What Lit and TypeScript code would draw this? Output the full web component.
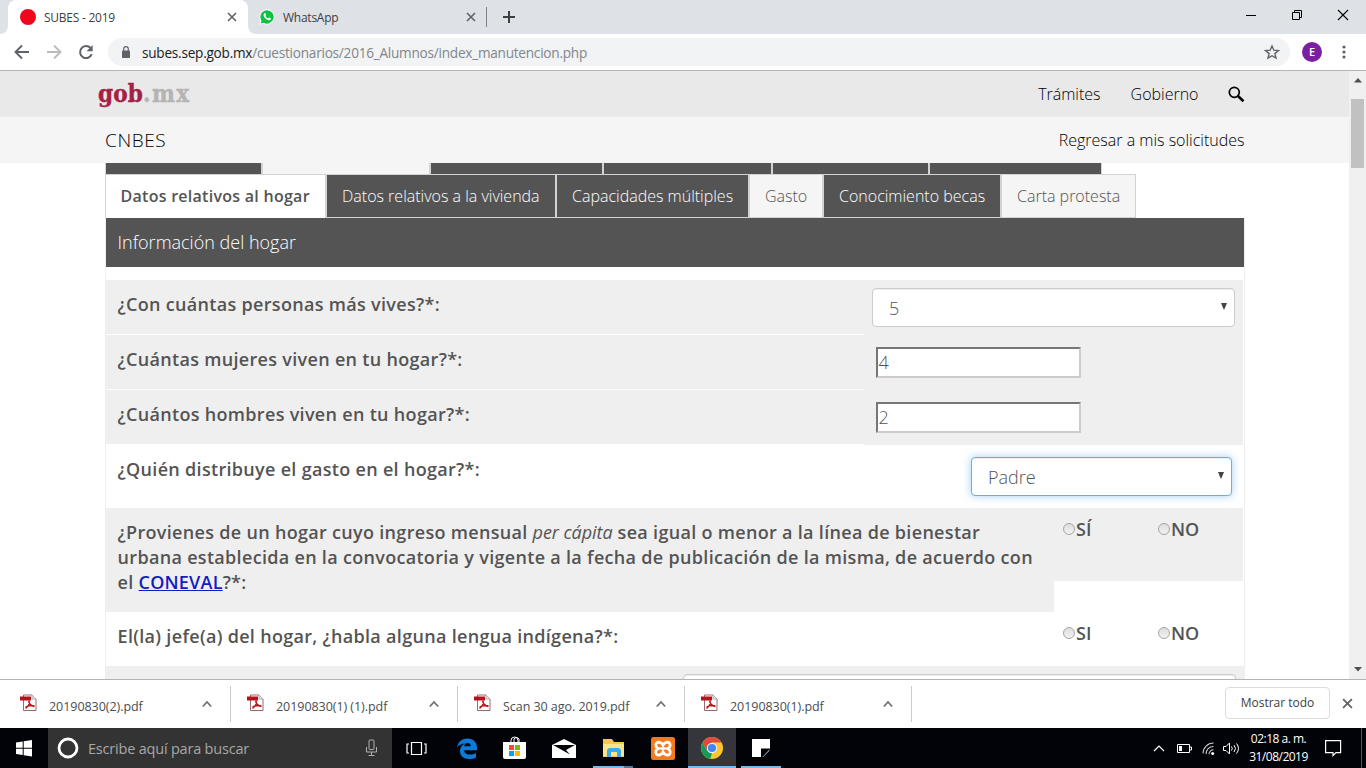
import { LitElement, html, css, svg } from "lit";
import { customElement } from "lit/decorators.js";

const closeIcon = (s: number) => html`<svg width=${s} height=${s} viewBox="0 0 10 10"><path d="M1 1l8 8M9 1l-8 8" stroke="#5f6368" stroke-width="1.6" fill="none"/></svg>`;

const pdfIcon = html`<svg width="17" height="17" viewBox="0 0 17 17"><path d="M3.5 1h8.500l4 4v11.500H3.500z" fill="#fff" stroke="#8a5a5e" stroke-width=".9"/><path d="M12 1v4h4" fill="#eee" stroke="#999" stroke-width=".8"/><path d="M9 6.500c1 2.500-.5 5.500-3.500 8M8.500 7c.5 2.500 2.500 4.800 6 5.500M5.500 13c3-1.500 6-1.800 9-1.200" fill="none" stroke="#b5121b" stroke-width="1.300"/><rect x="0" y="2.500" width="11" height="4" fill="#b5121b"/></svg>`;

@customElement("browser-chrome")
class BrowserChrome extends LitElement {
  static styles = css`
    :host { display: block; font-family: "Open Sans", "Noto Sans", sans-serif; color: #3c4043; }
    svg { display: block; flex: none; }
    .strip { display: flex; height: 34px; background: #dee1e6; align-items: stretch; }
    .edge { width: 8px; background: #fff; }
    .edge::before { content: ""; display: block; height: 34px; background: #dee1e6; border-bottom-right-radius: 8px; }
    .edge.right { width: 9px; }
    .edge.right::before { border-radius: 0 0 0 8px; }
    .tab { display: flex; align-items: center; font-size: 12px; box-sizing: border-box; white-space: nowrap; letter-spacing: -.25px; }
    .tab.active { width: 240px; background: #fff; border-radius: 8px 8px 0 0; padding: 0 11px 0 12px; }
    .tab.idle { width: 229px; padding: 0 10px 0 2px; }
    .tab .name { margin-left: 8px; flex: 1; }
    .dot { width: 16px; height: 16px; border-radius: 50%; background: #f0071c; }
    .sep { width: 1px; height: 20px; margin: 7px 15px 0 0; background: #80848a; }
    .plus { align-self: center; }
    .win { margin-left: auto; display: flex; align-items: center; gap: 34px; padding: 0 17px 5px 0; }
    .bar { display: flex; height: 36px; background: #fff; align-items: center; border-bottom: 1px solid #b6b4b6; }
    .nav { display: flex; gap: 16px; padding-left: 14px; width: 94px; }
    .omni { display: flex; align-items: center; box-sizing: border-box; width: 1182px; height: 28px; border-radius: 14px; background: #f1f3f4; padding: 0 10px 0 13px; font-size: 13.600px; white-space: nowrap; }
    .url { margin-left: 11px; flex: 1; letter-spacing: -.235px; color: #80868b; }
    .url b { font-weight: 400; color: #202124; }
    .avatar { width: 20px; height: 20px; margin-left: 12px; border-radius: 50%; background: #7b1fa2; color: #fff; font: 600 11px/20px "Open Sans", sans-serif; text-align: center; }
    .dots { margin-left: 20px; }
  `;
  render() {
    return html`
      <div class="strip">
        <div class="edge"></div>
        <div class="tab active"><span class="dot"></span><span class="name">SUBES - 2019</span>${closeIcon(10)}</div>
        <div class="edge right"></div>
        <div class="tab idle">
          <svg width="16" height="16" viewBox="0 0 16 16"><path d="M8 .3a7.600 7.600 0 1 1-3.700 14.300L.3 15.700l1.200-4A7.600 7.600 0 0 1 8 .3z" fill="#fff"/><path d="M8 1.200a6.700 6.700 0 1 1-3.400 12.500l-3 .8.900-2.900A6.700 6.700 0 0 1 8 1.200z" fill="#0dc143"/><path d="M5.300 4.300c.6-.5 1-.3 1.200.2l.5 1.200c.1.400-.5.900-.6 1.200.6 1.200 1.500 2 2.700 2.500.4-.2.800-1 1.200-.9l1.400.7c.6.400 0 1.600-.8 1.900-1.400.6-3.700-.5-5-2C4.600 7.600 4 5.400 5.300 4.300z" fill="#fff"/></svg>
          <span class="name">WhatsApp</span>${closeIcon(10)}
        </div>
        <div class="sep"></div>
        <svg class="plus" width="14" height="14" viewBox="0 0 14 14"><path d="M7 1v12M1 7h12" stroke="#3c4043" stroke-width="2"/></svg>
        <div class="win">
          <svg width="12" height="12" viewBox="0 0 12 12"><path d="M1 6.500h10" stroke="#000"/></svg>
          <svg width="12" height="12" viewBox="0 0 12 12"><path d="M1.500 3.500h7v7h-7zM3.500 3V1.500h7v7H9" fill="none" stroke="#000"/></svg>
          <svg width="12" height="12" viewBox="0 0 12 12"><path d="M1 1l10 10M11 1L1 11" stroke="#000" stroke-width="1.100"/></svg>
        </div>
      </div>
      <div class="bar">
        <div class="nav">
          <svg width="16" height="16" viewBox="0 0 16 16"><path d="M15 8H2M8 1.500L1.500 8 8 14.500" fill="none" stroke="#5f6368" stroke-width="1.900"/></svg>
          <svg width="16" height="16" viewBox="0 0 16 16"><path d="M1 8h13M8 1.500L14.500 8 8 14.500" fill="none" stroke="#babcbe" stroke-width="1.900"/></svg>
          <svg width="16" height="16" viewBox="0 0 16 16"><path d="M13.700 10.200A6 6 0 1 1 12.500 4" fill="none" stroke="#5f6368" stroke-width="2"/><path d="M14.700 1v6.300H8.500z" fill="#5f6368"/></svg>
        </div>
        <div class="omni">
          <svg width="10" height="12" viewBox="0 0 10 12"><rect x="1" y="4.500" width="8" height="7.500" rx=".8" fill="#5f6368"/><path d="M2.700 5V3a2.300 2.300 0 0 1 4.600 0v2" fill="none" stroke="#5f6368" stroke-width="1.200"/></svg>
          <span class="url"><b>subes.sep.gob.mx</b>/cuestionarios/2016_Alumnos/index_manutencion.php</span>
          <svg width="16" height="16" viewBox="0 0 16 16"><path d="M8 2l1.800 4.200 4.600.4-3.500 3 1.100 4.500L8 11.700l-4 2.400 1.100-4.500-3.500-3 4.600-.4z" fill="none" stroke="#5f6368" stroke-width="1.400"/></svg>
        </div>
        <div class="avatar">E</div>
        <svg class="dots" width="4" height="14" viewBox="0 0 4 14"><g fill="#5f6368"><circle cx="2" cy="2" r="1.600"/><circle cx="2" cy="7" r="1.600"/><circle cx="2" cy="12" r="1.600"/></g></svg>
      </div>`;
  }
}

@customElement("survey-page")
class SurveyPage extends LitElement {
  static styles = css`
    :host { display: flex; height: 608px; overflow: hidden; background: #fff; font-family: "Open Sans", sans-serif; font-weight: 300; color: #545454; }
    svg { display: block; flex: none; }
    .page { width: 1349px; overflow: hidden; }
    .gob { display: flex; align-items: center; height: 46px; box-sizing: border-box; padding: 0 104px 0 98px; background: #e9e9e9; color: #000; font-size: 16px; white-space: nowrap; }
    .logo { font: bold 24px/46px "DejaVu Serif Condensed", "DejaVu Serif", serif; font-stretch: condensed; color: #a42145; flex: 1; letter-spacing: .1px; -webkit-text-stroke: .4px; }
    .logo i { font-style: normal; color: #b4b4b4; letter-spacing: 1.500px; }
    .gob .link { margin-right: 30px; }
    .gob .link:nth-of-type(2) { margin-right: 29.500px; }
    .sub { display: flex; justify-content: space-between; align-items: center; height: 46px; padding: 0 104.500px 0 105px; background: #f5f5f5; color: #000; font-size: 16px; white-space: nowrap; }
    .sub .org { font-size: 19px; letter-spacing: .6px; }
    .upper { display: flex; height: 11px; margin-left: 105px; width: 997px; background: #d3d3d3; gap: 2px; padding-left: 1px; box-sizing: border-box; border-right: 1px solid #d3d3d3; }
    .upper i { display: block; background: #545454; }
    .upper i.light { background: #f5f5f5; }
    .tabs { display: grid; grid-template-columns: 219px 228px 191px 72px 176px 133px; gap: 2px; width: 1031px; height: 44px; box-sizing: border-box; margin-left: 105px; background: #d3d3d3; padding: 1px 1px 1px 1px; }
    .tabs div { background: #545454; color: #fff; font-size: 16px; line-height: 42px; padding-left: 15px; white-space: nowrap; }
    .tabs .on { background: #fff; color: #545454; font-weight: 600; margin-bottom: -1px; letter-spacing: .27px; padding-left: 14.500px; }
    .tabs .off { background: #f5f5f5; color: #545454; }
    .panel { width: 1138px; margin-left: 105px; border: solid #eee; border-width: 0 1px; }
    .title { height: 49px; background: #545454; color: #fff; font-size: 18px; line-height: 49px; padding-left: 11.500px; margin-bottom: 13px; }
    .row { display: flex; width: 1137px; }
    .q { font-weight: 600; font-size: 18px; line-height: 25px; padding: 12px 0 0 11.600px; box-sizing: border-box; white-space: nowrap; letter-spacing: .31px; }
    .q em { font-weight: 400; letter-spacing: -.05px; }
    .q a { color: #0f1dc2; text-decoration: underline; letter-spacing: .2px; }
    .w758 { width: 758px; height: 54px; background: #efefef; }
    .a379 { width: 379px; height: 55px; background: #efefef; box-sizing: border-box; }
    .select { display: flex; align-items: center; justify-content: space-between; box-sizing: border-box; height: 39px; background: #fff; border: 1px solid #ccc; border-radius: 4px; box-shadow: inset 0 1px 1px rgba(0,0,0,.075); font-size: 18px; padding: 0 7px 0 16px; }
    .select svg { margin-top: -2px; }
    .wide { width: 363px; margin: 8px 0 0 8px; }
    .focus { width: 261px; margin: 12px 0 0 853px; border-color: #66afe9; box-shadow: inset 0 1px 1px rgba(0,0,0,.075), 0 0 8px rgba(102,175,233,.6); }
    .field { box-sizing: border-box; width: 205px; height: 31px; margin: 12px 0 0 12px; background: #fff; border: 2px solid; border-color: #767676 #ccc #ccc #767676; font-size: 18px; line-height: 27px; padding-left: .5px; }
    .dist { height: 63px; }
    .dist .q { width: 12px; overflow: visible; }
    .long { width: 948px; height: 104px; background: #efefef; }
    .opts { display: grid; grid-template-columns: 95px 94px; height: 73px; background: #efefef; font-weight: 600; font-size: 18px; }
    .opt { display: flex; align-items: center; height: 25px; padding: 8px 0 0 9px; }
    .radio { width: 12px; height: 12px; box-sizing: border-box; border: 1px solid #a5a5a5; border-radius: 50%; background: linear-gradient(#dedede, #f2f2f2); margin-right: 1px; }
    .second .q { width: 948px; height: 54px; }
    .second .opts { background: none; height: 54px; }
    .last { height: 20px; width: 1138px; background: #efefef; }
    .last .select { width: 553px; margin: 8px 0 0 577px; flex: none; }
    .scroll { width: 17px; background: #f0f0f0; display: flex; flex-direction: column; align-items: center; }
    .scroll .up { margin: 7px 0 16px; }
    .thumb { width: 13px; height: 69px; background: #c1c1c1; flex: none; }
    .scroll .down { margin-top: auto; padding-bottom: 7px; }
  `;
  render() {
    const arrow = html`<svg width="6" height="7" viewBox="0 0 6 7"><path d="M0 0h6L3.300 6.500h-.6z" fill="#444"/></svg>`;
    const upper = [[155, 0], [166, 1], [171, 0], [167, 0], [155, 0], [171, 0]];
    const opts = (a: string) => html`<div class="opts"><div class="opt"><span class="radio"></span>${a}</div><div class="opt"><span class="radio"></span>NO</div></div>`;
    return html`
      <div class="page">
        <div class="gob"><div class="logo">gob<i>.mx</i></div><span class="link">Trámites</span><span class="link">Gobierno</span>
          <svg width="17" height="17" viewBox="0 0 17 17"><circle cx="6.300" cy="6.300" r="5" fill="none" stroke="#000" stroke-width="1.700"/><path d="M10 10l5.500 5.200" stroke="#000" stroke-width="2.600"/></svg>
        </div>
        <div class="sub"><span class="org">CNBES</span><span>Regresar a mis solicitudes</span></div>
        <div class="upper">${upper.map(([w, l]) => html`<i class=${l ? "light" : ""} style="width:${w}px"></i>`)}</div>
        <div class="tabs">
          <div class="on">Datos relativos al hogar</div><div>Datos relativos a la vivienda</div><div>Capacidades múltiples</div>
          <div class="off">Gasto</div><div>Conocimiento becas</div><div class="off">Carta protesta</div>
        </div>
        <div class="panel">
          <div class="title">Información del hogar</div>
          <div class="row"><div class="q w758">¿Con cuántas personas más vives?*:</div><div class="a379"><div class="select wide"><span>5</span>${arrow}</div></div></div>
          <div class="row"><div class="q w758">¿Cuántas mujeres viven en tu hogar?*:</div><div class="a379"><div class="field">4</div></div></div>
          <div class="row"><div class="q w758">¿Cuántos hombres viven en tu hogar?*:</div><div class="a379"><div class="field">2</div></div></div>
          <div class="row dist"><div class="q">¿Quién distribuye el gasto en el hogar?*:</div><div class="select focus"><span>Padre</span>${arrow}</div></div>
          <div class="row"><div class="q long">¿Provienes de un hogar cuyo ingreso mensual <em>per cápita</em> sea igual o menor a la línea de bienestar<br>urbana establecida en la convocatoria y vigente a la fecha de publicación de la misma, de acuerdo con<br>el <a>CONEVAL</a>?*:</div>${opts("SÍ")}</div>
          <div class="row second"><div class="q">El(la) jefe(a) del hogar, ¿habla alguna lengua indígena?*:</div>${opts("SI")}</div>
          <div class="row last"><div class="select"></div></div>
        </div>
      </div>
      <div class="scroll">
        <svg class="up" width="8" height="5" viewBox="0 0 8 5"><path d="M0 4.500L4 0l4 4.500z" fill="#505050"/></svg>
        <div class="thumb"></div>
        <svg class="down" width="8" height="5" viewBox="0 0 8 5"><path d="M0 0l4 4.500L8 0z" fill="#505050"/></svg>
      </div>`;
  }
}

@customElement("download-shelf")
class DownloadShelf extends LitElement {
  static styles = css`
    :host { display: flex; box-sizing: border-box; height: 49px; border-top: 1px solid #b3b3b3; background: #fff; font: 12.500px "Open Sans", sans-serif; color: #4a4d50; }
    svg { display: block; flex: none; }
    .item { display: flex; box-sizing: border-box; width: 227px; height: 36px; margin-top: 6px; border-right: 1px solid #ccc; padding: 0 18px 0 16px; white-space: nowrap; }
    .item:first-child { width: 231px; padding-left: 20px; }
    .icon { padding-top: 8px; }
    .name { flex: 1; margin: 12px 0 0 12px; line-height: 17px; letter-spacing: -.05px; }
    .chev { padding-top: 14px; }
    .all { box-sizing: border-box; width: 105px; height: 32px; margin: 7px 12px 0 auto; border: 1px solid #dadce0; border-radius: 4px; text-align: center; font-weight: 500; font-size: 12px; line-height: 30px; color: #3c4043; }
    .close { padding: 18px 13px 0 0; }
  `;
  render() {
    return html`${["20190830(2).pdf", "20190830(1) (1).pdf", "Scan 30 ago. 2019.pdf", "20190830(1).pdf"].map(n => html`
      <div class="item"><span class="icon">${pdfIcon}</span><span class="name">${n}</span>
        <svg class="chev" width="10" height="8" viewBox="0 0 10 8"><path d="M.8 6.500L5 2l4.200 4.500" fill="none" stroke="#6b6e72" stroke-width="1.700"/></svg></div>`)}
      <div class="all">Mostrar todo</div><div class="close">${closeIcon(11)}</div>`;
  }
}

@customElement("task-bar")
class TaskBar extends LitElement {
  static styles = css`
    :host { display: flex; height: 40px; background: #020308; font-family: "Open Sans", sans-serif; color: #fff; }
    svg { display: block; flex: none; }
    .start { width: 48px; display: grid; place-items: center; }
    .search { width: 344px; box-sizing: border-box; background: #333; display: flex; align-items: center; padding: 0 14px 0 9px; color: #a8a8a8; font-size: 14.500px; }
    .search span { flex: 1; margin-left: 9px; letter-spacing: -.2px; }
    .app { width: 48px; margin-right: 1.330px; display: grid; place-items: center; box-sizing: border-box; }
    .app.nudge { padding-left: 3px; }
    .app.on { background: #34363b; }
    .app.run { background-image: linear-gradient(#76b9ed, #76b9ed); background-size: 100% 2px; background-position: bottom; background-repeat: no-repeat; }
    .app.half { background-size: 40px 2px; }
    .app.multi { background-image: linear-gradient(90deg, #76b9ed 31px, #4d7ba0 31px); }
    .tray { display: flex; align-items: center; margin-left: auto; padding-right: 19px; }
    .clock { font-size: 12px; line-height: 18px; text-align: center; width: 62px; margin: 0 15.500px 0 7.500px; letter-spacing: -.5px; white-space: nowrap; }
    .end { width: 1px; background: #555; margin-right: 4px; }
  `;
  render() {
    const s = (body: unknown, w = 24, h = 24) => html`<svg width=${w} height=${h} viewBox="0 0 ${w} ${h}">${body}</svg>`;
    return html`
      <div class="start">${s(svg`<path d="M0 2.500l6.700-1v6.300H0zM7.700 1.300L16 0v7.800H7.700zM0 8.800h6.700v6.300L0 14zM7.700 8.800H16v7.700l-8.300-1.200z" fill="#fff"/>`, 16, 17)}</div>
      <div class="search">
        ${s(svg`<circle cx="11" cy="11" r="9" fill="none" stroke="#fff" stroke-width="2.800"/>`, 22, 22)}
        <span>Escribe aquí para buscar</span>
        ${s(svg`<rect x="4" y="1" width="5" height="9.500" rx="1" fill="none" stroke="#b0b0b0"/><path d="M1.500 8v5h10V8M6.500 13v3.500M3.500 16.500h6" fill="none" stroke="#b0b0b0"/>`, 13, 18)}
      </div>
      <div class="app">${s(svg`<path d="M5.500 1.500h10v12h-10zM3 3H1v9h2M18 3h2v9h-2" fill="none" stroke="#fff" stroke-width="1.200"/>`, 21, 15)}</div>
      <div class="app nudge">${s(svg`<path d="M0 9.500C1 3.500 5.500.5 10.500.5c6 0 9.500 4 9.500 9.300v2.400H7c.2 3 3 4.400 6 4.400 2.200 0 4.300-.6 6-1.600v4.400c-2 1.100-4.300 1.600-7 1.600-5.800 0-9-3.500-9-8C3 9.600 5 7 8 5.600 4.600 5.800 1.800 7.200 0 9.500zm7.100-1.200h6.700c0-2-1-3.300-3.200-3.300-2 0-3.300 1.500-3.500 3.300z" fill="#0b7ad9"/>`, 20, 21)}</div>
      <div class="app">${s(svg`<path d="M8 7V4.500a3.500 3.500 0 0 1 7 0V7M11 7V3a3 3 0 0 1 5 0v4" fill="none" stroke="#fff"/><path d="M0 6h23v15q0 2-2 2H2q-2 0-2-2z" fill="#fff"/><path d="M6 9h5v5H6z" fill="#f25022"/><path d="M12 9h5v5h-5z" fill="#7fba00"/><path d="M6 15h5v5H6z" fill="#00a4ef"/><path d="M12 15h5v5h-5z" fill="#ffb900"/>`, 23, 24)}</div>
      <div class="app">${s(svg`<path d="M0 6l12-6 12 6v13H0z" fill="#fff"/><path d="M1 6h22l-9 5 4 4.500z" fill="#030409"/>`, 24, 19)}</div>
      <div class="app run half multi">${s(svg`<path d="M0 0h9l2 3h10v15H0z" fill="#f7c64c"/><path d="M0 5h21v12H0z" fill="#fde38e"/><path d="M4 18v-7l2-2h10l2 2v7h-4v-5H8v5z" fill="#3aace8"/>`, 21, 18)}</div>
      <div class="app">${s(svg`<rect width="24" height="23" rx="2.500" fill="#f47a20"/><path d="M12 8.200C10.500 5 7 4.500 5.500 6.200S4.800 10.500 7.500 11.500C4.800 12.500 4 15.500 5.500 17.200S10.500 18 12 14.800C13.500 18 17 18.900 18.500 17.200S19.200 12.500 16.500 11.500C19.200 10.500 20 7.900 18.500 6.200S13.500 5 12 8.200z" fill="none" stroke="#fff" stroke-width="2.800"/><path d="M9.500 11.500h5" stroke="#fff" stroke-width="2.600"/>`, 24, 23)}</div>
      <div class="app on run">${s(svg`<circle cx="11" cy="11" r="11" fill="#fbc72f"/><path d="M1.500 5.500A11 11 0 0 1 20.500 5.500H11L6.200 13.800z" fill="#e04a3f"/><path d="M1.500 5.500L6.200 13.800 11 16.500l-1.800 5.300A11 11 0 0 1 1.500 5.500z" fill="#149b58"/><circle cx="11" cy="11" r="5.200" fill="#f2f2f2"/><circle cx="11" cy="11" r="4.100" fill="#4285f4"/>`, 22, 22)}</div>
      <div class="app run half">${s(svg`<path d="M0 0h18v18H0z" fill="#fff"/><path d="M9 18V9.500h9v8.500z" fill="#030409"/><path d="M10.500 18L17.500 10.500V18z" fill="#fff"/><path d="M11 18h7v-7z" fill="#030409"/>`, 18, 18)}</div>
      <div class="tray">
        ${s(svg`<path d="M1 7l5-5 5 5" fill="none" stroke="#fff" stroke-width="1.200"/>`, 24, 9)}
        ${s(svg`<path d="M.5.5h12v8H.500zM13 3h1.500v3H13" fill="none" stroke="#fff"/><path d="M2 2h3v5H2z" fill="#fff"/>`, 25, 9)}
        ${s(svg`<path d="M1 11.500A10.500 10.500 0 0 1 11.500 1M4 12a7.500 7.500 0 0 1 7.500-7.500M7 12.300a4.500 4.500 0 0 1 4.500-4.500" fill="none" stroke="#ccc" stroke-width="1.100"/><circle cx="10.700" cy="11.500" r="1.500" fill="#fff"/>`, 21, 13)}
        ${s(svg`<path d="M.5 4.500h2.500L6.500 1v11L3 8.500H.5z" fill="none" stroke="#fff"/><path d="M8.500 4.500q1.500 2 0 4M11 3q3 3.500 0 7M13.500 1.500q4 5 0 10" fill="none" stroke="#fff"/>`, 17, 13)}
        <div class="clock">02:18 a. m.<br>31/08/2019</div>
        ${s(svg`<path d="M.6.600h15v12H11l-3 3v-3H.600z" fill="none" stroke="#fff" stroke-width="1.200"/>`, 17, 17)}
      </div>
      <div class="end"></div>`;
  }
}

@customElement("app-root")
class AppRoot extends LitElement {
  static styles = css`
    :host { display: block; width: 1366px; height: 768px; overflow: hidden; }
  `;
  render() {
    return html`<browser-chrome></browser-chrome><survey-page></survey-page><download-shelf></download-shelf><task-bar></task-bar>`;
  }
}
